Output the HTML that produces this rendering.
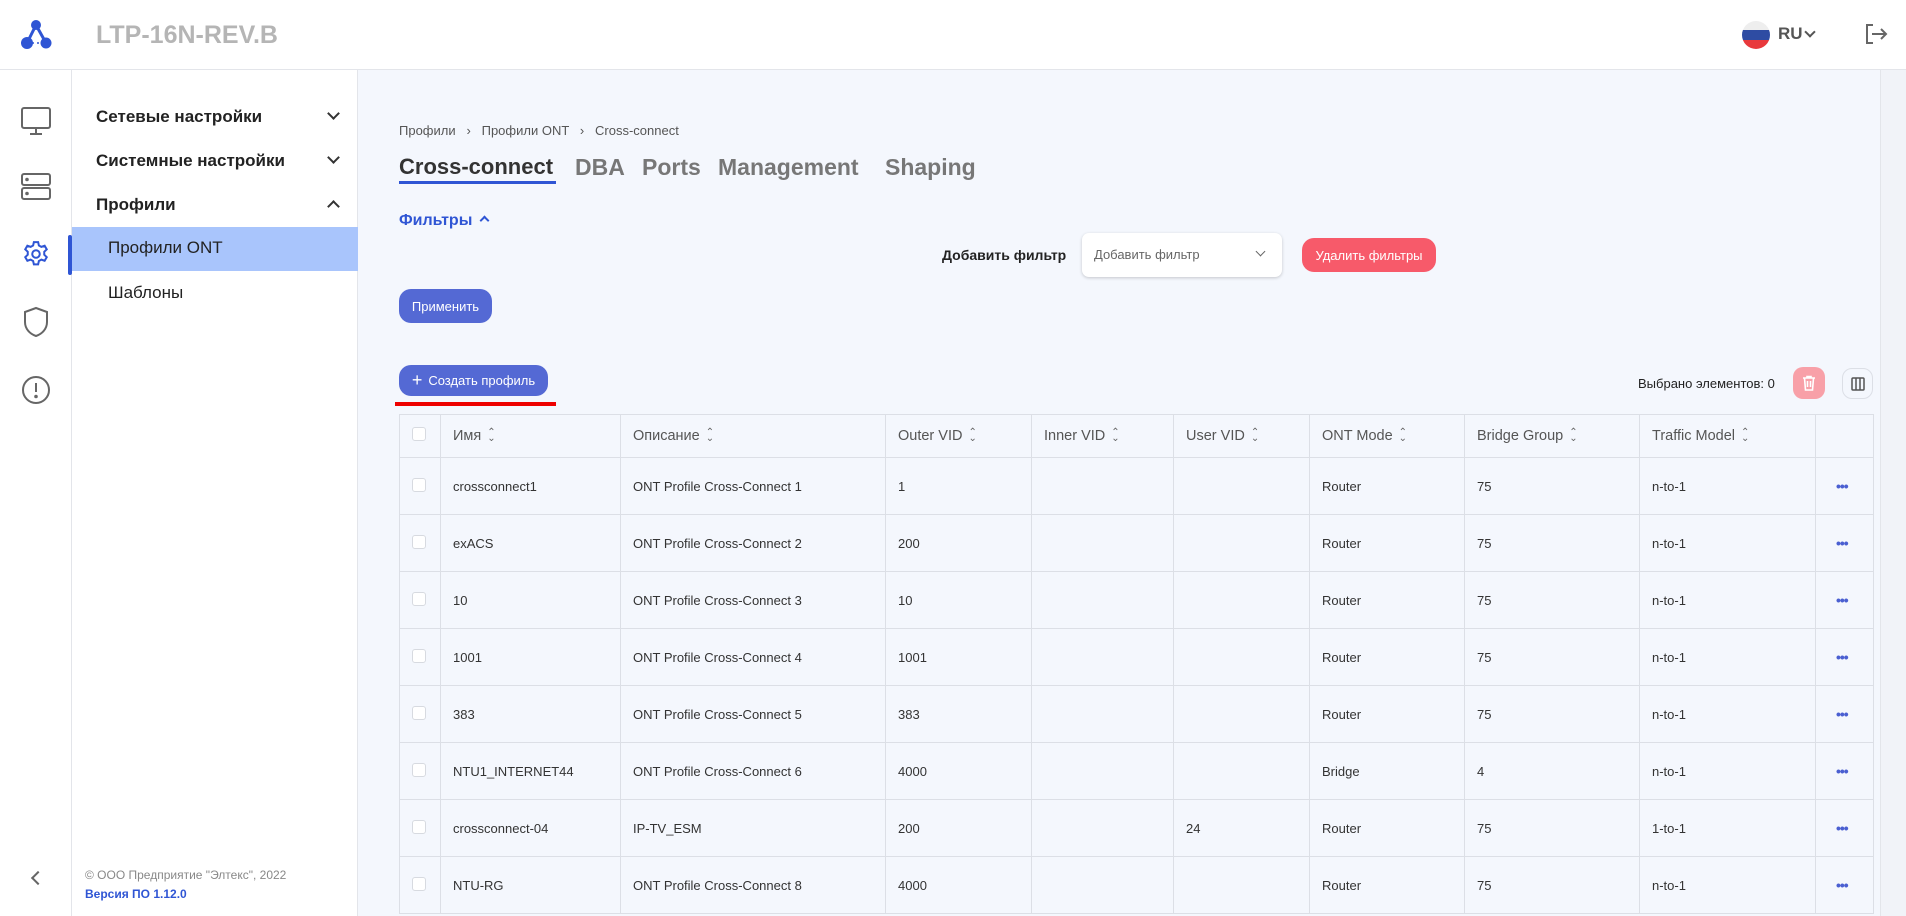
<!DOCTYPE html>
<html><head><meta charset="utf-8"><style>
*{box-sizing:border-box;margin:0;padding:0}
html,body{width:1906px;height:916px;overflow:hidden}
body{font-family:"Liberation Sans",sans-serif;background:#f4f7fd;color:#333}
#wrap{position:relative;width:1906px;height:916px;overflow:hidden;background:#f4f7fd}
.abs{position:absolute}
#hdr{left:0;top:0;width:1906px;height:70px;background:#fff;border-bottom:1px solid #e3e5ea}
#rail{left:0;top:70px;width:72px;height:846px;background:#fff;border-right:1px solid #e3e5ea}
#side{left:72px;top:70px;width:286px;height:846px;background:#fff;border-right:1px solid #e3e5ea}
.sh{position:absolute;left:24px;font-size:17px;font-weight:bold;color:#222}
.chev{position:absolute;left:257px;width:9px;height:9px;border-right:2px solid #333;border-bottom:2px solid #333}
table{border-collapse:collapse;position:absolute;left:399px;top:414px;table-layout:fixed}
td,th{border:1px solid #dcdfe6;font-size:13px;text-align:left;padding-left:12px;height:57px;color:#333;font-weight:normal}
th{height:43px;font-size:14.5px;color:#555}
.cb{width:14px;height:14px;border:1px solid #d7dae0;border-radius:3px;background:#fff;display:inline-block}
.sort{display:inline-block;margin-left:6px;color:#666;font-size:10px;line-height:6px;vertical-align:middle}
.dots{color:#4a5fd1;font-weight:bold;font-size:14px;letter-spacing:-1px}
.btn{position:absolute;border-radius:9px;color:#fff;font-size:13px;display:flex;align-items:center;justify-content:center}
.tab{position:absolute;top:154px;font-size:23px;font-weight:bold;color:#777;white-space:nowrap}
</style></head><body><div id="wrap">
<div id="hdr" class="abs">
 <svg class="abs" style="left:18px;top:16px" width="36" height="36" viewBox="0 0 36 36"><line x1="18" y1="9" x2="9" y2="27" stroke="#2f55d4" stroke-width="3"/><line x1="18" y1="9" x2="28" y2="27" stroke="#2f55d4" stroke-width="3"/><line x1="9" y1="27" x2="28" y2="27" stroke="#2f55d4" stroke-width="1.5" stroke-dasharray="2 3"/><circle cx="18" cy="9" r="5" fill="#2f55d4"/><circle cx="9" cy="27" r="6" fill="#2f55d4"/><circle cx="28" cy="27" r="5.5" fill="#2f55d4"/></svg>
 <div class="abs" style="left:96px;top:21px;font-size:25px;color:#b5b5b5;font-weight:bold">LTP-16N-REV.B</div>
 <div class="abs" style="left:1742px;top:21px;width:28px;height:28px;border-radius:50%;overflow:hidden"><div style="height:9px;background:#eee"></div><div style="height:10px;background:#2e4ca3"></div><div style="height:9px;background:#e8393c"></div></div>
 <div class="abs" style="left:1778px;top:24px;font-size:17px;color:#555;font-weight:bold">RU</div>
 <div class="abs" style="left:1806px;top:28px;width:8px;height:8px;border-right:2px solid #555;border-bottom:2px solid #555;transform:rotate(45deg)"></div>
 <svg class="abs" style="left:1864px;top:23px" width="24" height="22" viewBox="0 0 24 22" fill="none" stroke="#666" stroke-width="2"><path d="M9 2H3v18h6M8 11h14M17 6l5 5-5 5"/></svg>
</div>
<div id="rail" class="abs">
 <svg class="abs" style="left:20px;top:36px" width="32" height="30" viewBox="0 0 32 30" fill="none" stroke="#666" stroke-width="2"><rect x="2" y="2" width="28" height="20" rx="2"/><path d="M16 22v5M10 28h12"/></svg>
 <svg class="abs" style="left:20px;top:102px" width="32" height="30" viewBox="0 0 32 30" fill="none" stroke="#666" stroke-width="2"><rect x="2" y="2" width="28" height="11" rx="2"/><rect x="2" y="16" width="28" height="11" rx="2"/><circle cx="7" cy="7.5" r=".8" fill="#666"/><circle cx="7" cy="21.5" r=".8" fill="#666"/></svg>
 <div class="abs" style="left:68px;top:165px;width:4px;height:40px;background:#2f55d4;border-radius:2px"></div>
 <svg class="abs" style="left:21px;top:169px" width="30" height="30" viewBox="0 0 24 24" fill="none" stroke="#2f55d4" stroke-width="1.6"><circle cx="12" cy="12" r="3"/><path d="M10.3 2.5h3.4l.6 2.7 2 1.1 2.6-.9 1.7 2.9-2 1.9v2.4l2 1.9-1.7 2.9-2.6-.9-2 1.1-.6 2.7h-3.4l-.6-2.7-2-1.1-2.6.9-1.7-2.9 2-1.9v-2.4l-2-1.9 1.7-2.9 2.6.9 2-1.1z"/></svg>
 <svg class="abs" style="left:22px;top:236px" width="28" height="32" viewBox="0 0 28 32" fill="none" stroke="#666" stroke-width="2"><path d="M14 2l11 4v10c0 7-5 12-11 14C8 28 3 23 3 16V6z"/></svg>
 <svg class="abs" style="left:21px;top:305px" width="30" height="30" viewBox="0 0 30 30" fill="none" stroke="#666" stroke-width="2"><circle cx="15" cy="15" r="13"/><path d="M15 8v9"/><circle cx="15" cy="21.5" r=".8" fill="#666"/></svg>
 <div class="abs" style="left:33px;top:803px;width:10px;height:10px;border-left:2.5px solid #666;border-bottom:2.5px solid #666;transform:rotate(45deg)"></div>
</div>
<div id="side" class="abs">
 <div class="sh" style="top:37px">Сетевые настройки</div><div class="chev" style="top:39px;transform:rotate(45deg)"></div>
 <div class="sh" style="top:81px">Системные настройки</div><div class="chev" style="top:83px;transform:rotate(45deg)"></div>
 <div class="sh" style="top:125px">Профили</div><div class="chev" style="top:132px;transform:rotate(225deg)"></div>
 <div class="abs" style="left:0;top:157px;width:286px;height:44px;background:#a9c5fc"></div>
 <div class="abs" style="left:36px;top:168px;font-size:17px;color:#222">Профили ONT</div>
 <div class="abs" style="left:36px;top:213px;font-size:17px;color:#222">Шаблоны</div>
 <div class="abs" style="left:13px;top:798px;font-size:12px;color:#888">© ООО Предприятие "Элтекс", 2022</div>
 <div class="abs" style="left:13px;top:817px;font-size:12px;color:#2f55d4;font-weight:bold">Версия ПО 1.12.0</div>
</div>
<div class="abs" style="left:399px;top:123px;font-size:13px;color:#555">Профили &nbsp;&nbsp;›&nbsp;&nbsp; Профили ONT &nbsp;&nbsp;›&nbsp;&nbsp; Cross-connect</div>
<div class="tab" style="left:399px;font-size:22px;color:#333">Cross-connect</div>
<div class="abs" style="left:399px;top:181px;width:157px;height:3px;background:#2f55d4"></div>
<div class="tab" style="left:575px">DBA</div>
<div class="tab" style="left:642px">Ports</div>
<div class="tab" style="left:718px">Management</div>
<div class="tab" style="left:885px">Shaping</div>
<div class="abs" style="left:399px;top:212px;font-size:16px;font-weight:bold;color:#2f55d4">Фильтры <span style="display:inline-block;width:7px;height:7px;border-left:2px solid #2f55d4;border-top:2px solid #2f55d4;transform:rotate(45deg);margin-left:4px;vertical-align:1px"></span></div>
<div class="abs" style="left:942px;top:247px;font-size:14px;font-weight:bold;color:#222">Добавить фильтр</div>
<div class="abs" style="left:1082px;top:233px;width:200px;height:44px;background:#fff;border-radius:7px;box-shadow:0 1px 3px rgba(0,0,0,.2);font-size:13px;color:#666;padding:14px 12px">Добавить фильтр<span style="position:absolute;right:18px;top:15px;width:7px;height:7px;border-right:1.5px solid #666;border-bottom:1.5px solid #666;transform:rotate(45deg)"></span></div>
<div class="btn" style="left:1302px;top:238px;width:134px;height:34px;background:#f75a6a;border-radius:12px">Удалить фильтры</div>
<div class="btn" style="left:399px;top:289px;width:93px;height:34px;background:#5469d4;border-radius:12px">Применить</div>
<div class="btn" style="left:399px;top:365px;width:149px;height:31px;background:#5469d4;border-radius:12px"><span style="font-size:18px;margin-right:6px">+</span>Создать профиль</div>
<div class="abs" style="left:395px;top:402px;width:161px;height:4px;background:#e00"></div>
<div class="abs" style="left:1638px;top:376px;font-size:13px;color:#222">Выбрано элементов: 0</div>
<div class="abs" style="left:1793px;top:367px;width:32px;height:32px;border-radius:10px;background:#f8a0a8"><svg style="margin:8px" width="16" height="16" viewBox="0 0 16 16" fill="none" stroke="#fff" stroke-width="1.6"><path d="M2 3h12M6 3V1.5h4V3M3.5 3l1 12h7l1-12M6.5 6v6M9.5 6v6"/></svg></div>
<div class="abs" style="left:1842px;top:368px;width:31px;height:31px;border-radius:10px;border:1px solid #dcdfe6;background:#f4f7fd"><svg style="margin:8px" width="14" height="14" viewBox="0 0 14 14" fill="none" stroke="#555" stroke-width="1.5"><rect x="1" y="1" width="12" height="12" rx="1"/><path d="M5 1v12M9 1v12"/></svg></div>
<div class="abs" style="left:1880px;top:70px;width:26px;height:846px;background:#f1f3f8;border-left:1px solid #e3e5ea"></div>
<table>
<colgroup><col style="width:41px"><col style="width:180px"><col style="width:265px"><col style="width:146px"><col style="width:142px"><col style="width:136px"><col style="width:155px"><col style="width:175px"><col style="width:176px"><col style="width:58px"></colgroup>
<tr><th><span class="cb"></span></th><th>Имя<span class="sort">⌃<br>⌄</span></th><th>Описание<span class="sort">⌃<br>⌄</span></th><th>Outer VID<span class="sort">⌃<br>⌄</span></th><th>Inner VID<span class="sort">⌃<br>⌄</span></th><th>User VID<span class="sort">⌃<br>⌄</span></th><th>ONT Mode<span class="sort">⌃<br>⌄</span></th><th>Bridge Group<span class="sort">⌃<br>⌄</span></th><th>Traffic Model<span class="sort">⌃<br>⌄</span></th><th></th></tr>
<tr><td><span class="cb"></span></td><td>crossconnect1</td><td>ONT Profile Cross-Connect 1</td><td>1</td><td></td><td></td><td>Router</td><td>75</td><td>n-to-1</td><td style="padding-left:20px"><span class="dots">•••</span></td></tr>
<tr><td><span class="cb"></span></td><td>exACS</td><td>ONT Profile Cross-Connect 2</td><td>200</td><td></td><td></td><td>Router</td><td>75</td><td>n-to-1</td><td style="padding-left:20px"><span class="dots">•••</span></td></tr>
<tr><td><span class="cb"></span></td><td>10</td><td>ONT Profile Cross-Connect 3</td><td>10</td><td></td><td></td><td>Router</td><td>75</td><td>n-to-1</td><td style="padding-left:20px"><span class="dots">•••</span></td></tr>
<tr><td><span class="cb"></span></td><td>1001</td><td>ONT Profile Cross-Connect 4</td><td>1001</td><td></td><td></td><td>Router</td><td>75</td><td>n-to-1</td><td style="padding-left:20px"><span class="dots">•••</span></td></tr>
<tr><td><span class="cb"></span></td><td>383</td><td>ONT Profile Cross-Connect 5</td><td>383</td><td></td><td></td><td>Router</td><td>75</td><td>n-to-1</td><td style="padding-left:20px"><span class="dots">•••</span></td></tr>
<tr><td><span class="cb"></span></td><td>NTU1_INTERNET44</td><td>ONT Profile Cross-Connect 6</td><td>4000</td><td></td><td></td><td>Bridge</td><td>4</td><td>n-to-1</td><td style="padding-left:20px"><span class="dots">•••</span></td></tr>
<tr><td><span class="cb"></span></td><td>crossconnect-04</td><td>IP-TV_ESM</td><td>200</td><td></td><td>24</td><td>Router</td><td>75</td><td>1-to-1</td><td style="padding-left:20px"><span class="dots">•••</span></td></tr>
<tr><td><span class="cb"></span></td><td>NTU-RG</td><td>ONT Profile Cross-Connect 8</td><td>4000</td><td></td><td></td><td>Router</td><td>75</td><td>n-to-1</td><td style="padding-left:20px"><span class="dots">•••</span></td></tr>
</table>
</div></body></html>
